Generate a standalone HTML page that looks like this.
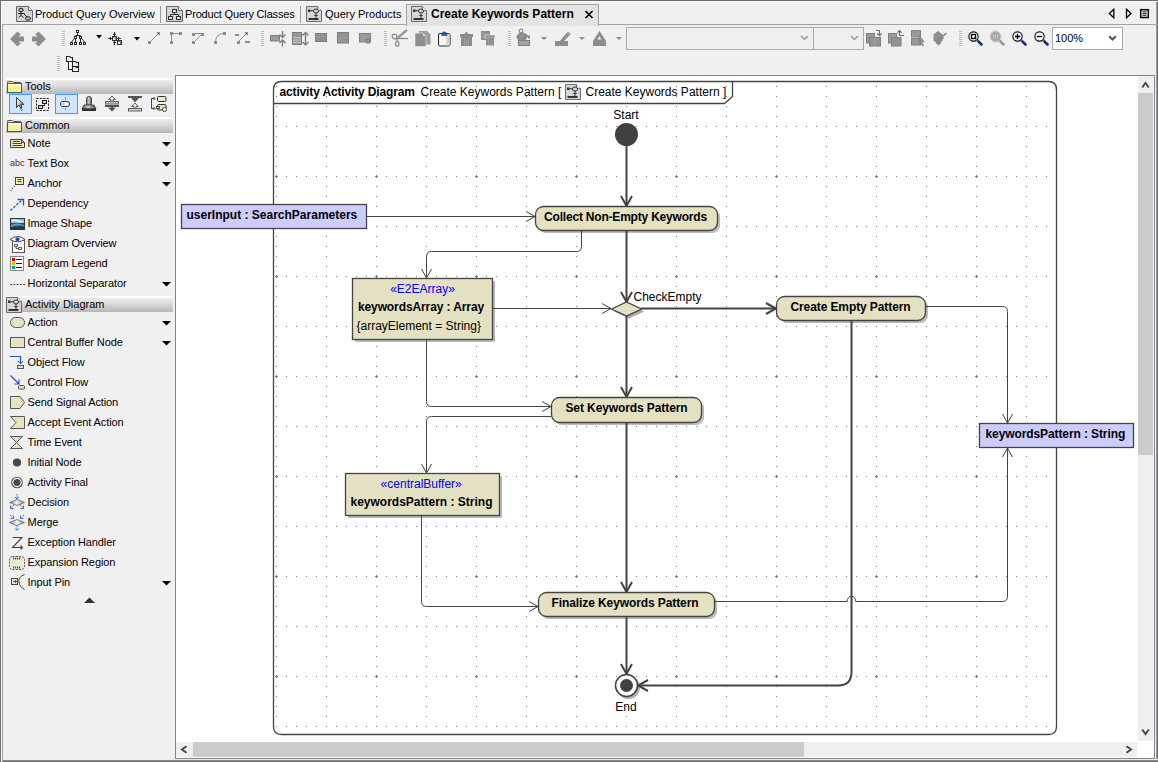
<!DOCTYPE html><html><head><meta charset="utf-8"><title>MagicDraw</title><style>html,body{margin:0;padding:0;width:1158px;height:762px;overflow:hidden;background:#f0f0f0;position:relative;font-family:"Liberation Sans",sans-serif}svg{overflow:visible}</style></head><body><div style="position:absolute;left:175px;top:75px;width:980px;height:684px;background:#fff;box-sizing:border-box;border:1px solid #7d8592;"></div><div style="position:absolute;left:1155px;top:25px;width:1px;height:737px;background:#f2f2f2"></div><div style="position:absolute;left:1156px;top:1px;width:1px;height:761px;background:#9c9c9c"></div><div style="position:absolute;left:1157px;top:0px;width:1px;height:762px;background:#6c6c6c"></div><div style="position:absolute;left:0px;top:759px;width:1158px;height:1px;background:#ececec"></div><div style="position:absolute;left:0px;top:760px;width:1158px;height:1px;background:#8c8c8c"></div><div style="position:absolute;left:0px;top:761px;width:1158px;height:1px;background:#6c6c6c"></div><div style="position:absolute;left:0px;top:0px;width:1158px;height:1px;background:#6b6b6b"></div><svg style="position:absolute;left:16px;top:6px" width="17" height="17" viewBox="0 0 17 17"><path d="M0.5 0.5H12.5L16.5 4.5V15.5H0.5Z" fill="#d4d4d4" stroke="#666"/><path d="M12.5 0.5V4.5H16.5" fill="#fff" stroke="#666"/><ellipse cx="5" cy="4" rx="2.2" ry="1.8" fill="#a9bce0" stroke="#222"/><path d="M5 6v3.5M2 7.5h6.5M2.5 11.5l2.5-2 2.5 2M8 8l3 3" stroke="#222" fill="none"/><ellipse cx="12" cy="12.5" rx="2.6" ry="1.7" fill="#a9bce0" stroke="#222"/></svg><div style="position:absolute;left:35px;top:8px;font:normal 11px/13px 'Liberation Sans', sans-serif;color:#000;white-space:pre;">Product Query Overview</div><div style="position:absolute;left:160px;top:6px;width:1px;height:17px;background:#9a9a9a"></div><svg style="position:absolute;left:166px;top:6px" width="17" height="17" viewBox="0 0 17 17"><path d="M0.5 0.5H12.5L16.5 4.5V15.5H0.5Z" fill="#d4d4d4" stroke="#666"/><path d="M12.5 0.5V4.5H16.5" fill="#fff" stroke="#666"/><rect x="6.5" y="3.5" width="4" height="3" fill="#cde" stroke="#333"/><rect x="2.5" y="10.5" width="4" height="3" fill="#cde" stroke="#333"/><rect x="10.5" y="10.5" width="4" height="3" fill="#cde" stroke="#333"/><path d="M8.5 6.5v2M4.5 10.5v-2h8v2" fill="none" stroke="#333"/></svg><div style="position:absolute;left:185px;top:8px;font:normal 11px/13px 'Liberation Sans', sans-serif;color:#000;white-space:pre;letter-spacing:-0.17px">Product Query Classes</div><div style="position:absolute;left:300px;top:6px;width:1px;height:17px;background:#9a9a9a"></div><svg style="position:absolute;left:306px;top:6px" width="17" height="17" viewBox="0 0 17 17"><path d="M0.5 0.5H11.5L15.5 4.5V15.5H0.5Z" fill="#d6d6d6" stroke="#6a6a6a"/><path d="M11.5 0.5V4.5H15.5" fill="#fafafa" stroke="#7a7a7a"/><rect x="2" y="3.5" width="2.5" height="2.5" fill="#333"/><path d="M4.5 4.75H7.5M10 7V12M8.3 9.5H11.7" stroke="#333"/><ellipse cx="10" cy="5" rx="2.6" ry="2" fill="#c5d5ef" stroke="#333"/><rect x="2.5" y="12" width="10" height="2" fill="#333"/></svg><div style="position:absolute;left:325px;top:8px;font:normal 11px/13px 'Liberation Sans', sans-serif;color:#000;white-space:pre;">Query Products</div><div style="position:absolute;left:0px;top:1px;width:1158px;height:1px;background:#fbfbfb"></div><div style="position:absolute;left:406px;top:4px;width:193px;height:22px;background:#e3e3e3;box-sizing:border-box;border:1px solid #a3a3a3;border-bottom:none"></div><svg style="position:absolute;left:411px;top:6px" width="17" height="17" viewBox="0 0 17 17"><path d="M0.5 0.5H11.5L15.5 4.5V15.5H0.5Z" fill="#d6d6d6" stroke="#6a6a6a"/><path d="M11.5 0.5V4.5H15.5" fill="#fafafa" stroke="#7a7a7a"/><rect x="2" y="3.5" width="2.5" height="2.5" fill="#333"/><path d="M4.5 4.75H7.5M10 7V12M8.3 9.5H11.7" stroke="#333"/><ellipse cx="10" cy="5" rx="2.6" ry="2" fill="#c5d5ef" stroke="#333"/><rect x="2.5" y="12" width="10" height="2" fill="#333"/></svg><div style="position:absolute;left:431px;top:7px;font:bold 12px/14px 'Liberation Sans', sans-serif;color:#000;white-space:pre;">Create Keywords Pattern</div><svg style="position:absolute;left:584px;top:10px" width="10" height="9" viewBox="0 0 10 9"><path d="M1.5 1L8.5 8M8.5 1L1.5 8" stroke="#000" stroke-width="1.7"/></svg><svg style="position:absolute;left:1108px;top:8px" width="8" height="12" viewBox="0 0 8 12"><path d="M5.8 1.2V9.8L1.3 5.5Z" fill="none" stroke="#000" stroke-width="1.3"/></svg><svg style="position:absolute;left:1125px;top:8px" width="8" height="12" viewBox="0 0 8 12"><path d="M1.5 1.2V9.8L6 5.5Z" fill="none" stroke="#000" stroke-width="1.3"/></svg><svg style="position:absolute;left:1139px;top:8px" width="11" height="11" viewBox="0 0 11 11"><rect x="1.7" y="1.7" width="7.6" height="7.8" fill="none" stroke="#000" stroke-width="1.5"/><path d="M3.5 3.9H7.5M3.5 5.6H7.5M3.5 7.3H7.5" stroke="#000" stroke-width="0.9"/></svg><div style="position:absolute;left:3px;top:24px;width:404px;height:1px;background:#a3a3a3"></div><div style="position:absolute;left:598px;top:24px;width:560px;height:1px;background:#a3a3a3"></div><div style="position:absolute;left:0;top:1px;width:1158px;height:60px"><svg style="position:absolute;left:8px;top:28px" width="40" height="20" viewBox="0 0 40 20"><path d="M2 10L9.5 2.5L12.8 5.8L10.5 7.5H16V12.5H10.5L12.8 14.2L9.5 17.5Z" fill="#8c8c8c"/><path d="M38 10L30.5 2.5L27.2 5.8L29.5 7.5H24V12.5H29.5L27.2 14.2L30.5 17.5Z" fill="#8c8c8c"/></svg><svg style="position:absolute;left:62px;top:30px" width="3" height="15" viewBox="0 0 3 15"><rect x="0" y="0" width="3" height="1" fill="#bdbdbd"/><rect x="0" y="2" width="3" height="1" fill="#bdbdbd"/><rect x="0" y="4" width="3" height="1" fill="#bdbdbd"/><rect x="0" y="6" width="3" height="1" fill="#bdbdbd"/><rect x="0" y="8" width="3" height="1" fill="#bdbdbd"/><rect x="0" y="10" width="3" height="1" fill="#bdbdbd"/><rect x="0" y="12" width="3" height="1" fill="#bdbdbd"/><rect x="0" y="14" width="3" height="1" fill="#bdbdbd"/></svg><svg style="position:absolute;left:66px;top:27px" width="24" height="20" viewBox="0 0 24 20"><g fill="#fff" stroke="#2a2a2a" stroke-width="1"><rect x="10.5" y="2.5" width="2" height="2"/><rect x="8.5" y="8.5" width="2" height="2"/><rect x="13.5" y="8.5" width="2" height="2"/><rect x="4.5" y="14.5" width="2" height="2"/><rect x="8.5" y="14.5" width="2" height="2"/><rect x="13.5" y="14.5" width="2" height="2"/><rect x="17.5" y="14.5" width="2" height="2"/><path fill="none" d="M11.5 5V7.5M9.5 8V7.5H14.5V8M9.5 11V14M14.5 11V14M8 11L5.5 14M16 11L18.5 14"/></g></svg><svg style="position:absolute;left:96px;top:34px" width="7" height="5" viewBox="0 0 7 5"><path d="M0 0H6L3 3.5Z" fill="#000"/></svg><svg style="position:absolute;left:104px;top:27px" width="40" height="20" viewBox="0 0 40 20"><path d="M10.5 4V17M4 10.5H17M9 6.5H12M9 14.5H12M6.5 9V12M14.5 9V12" stroke="#333" stroke-width="1.2"/><rect x="8.5" y="8.5" width="4" height="4" fill="#e98d2b" stroke="#333"/><rect x="9" y="10" width="2" height="2" fill="#f4f0d0"/><rect x="13.5" y="12.5" width="4" height="4" fill="#3f9f60" stroke="#333"/><rect x="14" y="14" width="2" height="2" fill="#f4f0d0"/><path d="M30 9H36L33 12.5Z" fill="#000"/></svg><svg style="position:absolute;left:148px;top:30px" width="14" height="14" viewBox="0 0 14 14"><path d="M1.5 11.5L10.5 2.5" stroke="#8c8c8c"/><rect x="0" y="10" width="3" height="3" fill="#8c8c8c"/><rect x="9" y="1" width="3" height="3" fill="#8c8c8c"/></svg><svg style="position:absolute;left:170px;top:30px" width="14" height="14" viewBox="0 0 14 14"><path d="M1.5 11.5V2.5H10.5" stroke="#8c8c8c" fill="none"/><rect x="0" y="10" width="3" height="3" fill="#8c8c8c"/><rect x="0" y="1" width="3" height="3" fill="#8c8c8c"/><rect x="9" y="1" width="3" height="3" fill="#8c8c8c"/></svg><svg style="position:absolute;left:192px;top:30px" width="14" height="14" viewBox="0 0 14 14"><path d="M1.5 2.5H10.5L1.5 11.5" stroke="#8c8c8c" fill="none"/><rect x="0" y="2" width="3" height="3" fill="#8c8c8c"/><rect x="9" y="2" width="3" height="3" fill="#8c8c8c"/><rect x="0" y="10" width="3" height="3" fill="#8c8c8c"/></svg><svg style="position:absolute;left:214px;top:30px" width="14" height="14" viewBox="0 0 14 14"><path d="M1.5 11.5Q1.5 2.5 10.5 2.5" stroke="#8c8c8c" fill="none"/><rect x="0" y="10" width="3" height="3" fill="#8c8c8c"/><rect x="9" y="1" width="3" height="3" fill="#8c8c8c"/></svg><svg style="position:absolute;left:235px;top:30px" width="15" height="14" viewBox="0 0 15 14"><path d="M3.5 10.5L11.5 2.5" stroke="#8c8c8c"/><rect x="0" y="3" width="4" height="2" fill="#8c8c8c"/><rect x="10" y="1" width="3" height="3" fill="#8c8c8c"/><rect x="2" y="10" width="3" height="3" fill="#8c8c8c"/><rect x="10" y="10" width="5" height="2" fill="#8c8c8c"/></svg><svg style="position:absolute;left:261px;top:30px" width="3" height="15" viewBox="0 0 3 15"><rect x="0" y="0" width="3" height="1" fill="#bdbdbd"/><rect x="0" y="2" width="3" height="1" fill="#bdbdbd"/><rect x="0" y="4" width="3" height="1" fill="#bdbdbd"/><rect x="0" y="6" width="3" height="1" fill="#bdbdbd"/><rect x="0" y="8" width="3" height="1" fill="#bdbdbd"/><rect x="0" y="10" width="3" height="1" fill="#bdbdbd"/><rect x="0" y="12" width="3" height="1" fill="#bdbdbd"/><rect x="0" y="14" width="3" height="1" fill="#bdbdbd"/></svg><svg style="position:absolute;left:258px;top:26px" width="132" height="23" viewBox="0 0 132 23"><g><rect x="12.5" y="8.5" width="9" height="5.5" fill="#999" stroke="#7e7e7e"/><path d="M13 9L21 13.5" stroke="#aaa" stroke-width="0.6"/><path d="M21.5 7.5L24.5 10.5L27.5 7.5M24.5 4v6M21.5 16L24.5 13L27.5 16M24.5 13.5v6" stroke="#7e7e7e" stroke-width="1.4" fill="none"/><rect x="34.5" y="5.5" width="9" height="12" fill="#999" stroke="#7e7e7e"/><path d="M35 10.5h8M35 13h8M35 15.5h8" stroke="#cfcfcf" stroke-width="0.8"/><path d="M44.5 8.5L47.5 5.5L50.5 8.5M47.5 5.5V18M44.5 15L47.5 18L50.5 15" stroke="#7e7e7e" stroke-width="1.4" fill="none"/><rect x="57.5" y="6.5" width="11" height="8" fill="#999" stroke="#7e7e7e"/><path d="M59 8.5h2M62 8.5h2M65 8.5h2M59 11h2M62 11h2M65 11h2M60 13h6" stroke="#7a7a7a" stroke-width="0.8"/><rect x="79.5" y="5.5" width="11" height="10.5" fill="#939393" stroke="#7e7e7e"/><path d="M80 11h10" stroke="#a0a0a0" stroke-width="0.6"/><rect x="101.5" y="6.5" width="11" height="8.5" fill="#999" stroke="#7e7e7e"/><path d="M102 7L112 14.5" stroke="#aaa" stroke-width="0.6"/><rect x="108.5" y="12.5" width="3" height="3.5" fill="#999" stroke="#7e7e7e"/></g></svg><svg style="position:absolute;left:384px;top:30px" width="3" height="15" viewBox="0 0 3 15"><rect x="0" y="0" width="3" height="1" fill="#bdbdbd"/><rect x="0" y="2" width="3" height="1" fill="#bdbdbd"/><rect x="0" y="4" width="3" height="1" fill="#bdbdbd"/><rect x="0" y="6" width="3" height="1" fill="#bdbdbd"/><rect x="0" y="8" width="3" height="1" fill="#bdbdbd"/><rect x="0" y="10" width="3" height="1" fill="#bdbdbd"/><rect x="0" y="12" width="3" height="1" fill="#bdbdbd"/><rect x="0" y="14" width="3" height="1" fill="#bdbdbd"/></svg><svg style="position:absolute;left:388px;top:26px" width="112" height="23" viewBox="0 0 112 23"><g><circle cx="6.5" cy="9.5" r="2.3" fill="none" stroke="#8a8a8a" stroke-width="1.3"/><rect x="7.6" y="14.6" width="3.2" height="4.6" rx="1" fill="none" stroke="#8a8a8a" stroke-width="1.2"/><path d="M9 11.5L19 3" stroke="#9a9a9a" stroke-width="2.4"/><path d="M9 11.5H20" stroke="#8a8a8a" stroke-width="1.3"/><path d="M8.5 11.5L9.5 14.5" stroke="#8a8a8a" stroke-width="1.2"/><path d="M31 4H39L42.5 7.5V17.5H31Z" fill="#9c9c9c"/><path d="M27 6H35L38 9V19.5H27Z" fill="#8e8e8e" stroke="#f0f0f0" stroke-width="0.6"/><path d="M35 6V9H38" fill="#ccc"/><rect x="50.5" y="6.5" width="11.5" height="12.5" rx="1.5" fill="#f6f6f6" stroke="#222"/><rect x="58" y="7" width="3.5" height="11.5" fill="#d8d8d8"/><path d="M53.5 8.5L55 5H57.5L59 8.5Z" fill="#1f5eb5" stroke="#173d73" stroke-width="0.6"/><rect x="72" y="7" width="13" height="3" fill="#8c8c8c"/><path d="M76.5 7L78.5 4.5L80.5 7Z" fill="#8c8c8c"/><rect x="73" y="10" width="11" height="9" fill="#8c8c8c"/><path d="M76.5 11v7M78.5 11v7M80.5 11v7" stroke="#a6a6a6" stroke-width="0.8"/><rect x="93" y="4" width="9" height="9" fill="#8c8c8c"/><path d="M95 4v9M97.5 4v9M93 7h9M93 10h9" stroke="#a8a8a8" stroke-width="0.6"/><rect x="97" y="8" width="10" height="3" fill="#8c8c8c" stroke="#f0f0f0" stroke-width="0.6"/><rect x="98" y="11" width="8" height="7.5" fill="#8c8c8c"/><path d="M100.5 12v6M103 12v6" stroke="#a6a6a6" stroke-width="0.8"/></g></svg><svg style="position:absolute;left:508px;top:30px" width="3" height="15" viewBox="0 0 3 15"><rect x="0" y="0" width="3" height="1" fill="#bdbdbd"/><rect x="0" y="2" width="3" height="1" fill="#bdbdbd"/><rect x="0" y="4" width="3" height="1" fill="#bdbdbd"/><rect x="0" y="6" width="3" height="1" fill="#bdbdbd"/><rect x="0" y="8" width="3" height="1" fill="#bdbdbd"/><rect x="0" y="10" width="3" height="1" fill="#bdbdbd"/><rect x="0" y="12" width="3" height="1" fill="#bdbdbd"/><rect x="0" y="14" width="3" height="1" fill="#bdbdbd"/></svg><svg style="position:absolute;left:512px;top:26px" width="112" height="23" viewBox="0 0 112 23"><g><path d="M4 9.5L9 4L16.5 8.5L13 14H6.5Z" fill="#8c8c8c"/><circle cx="9" cy="4" r="1.8" fill="#f0f0f0" stroke="#8c8c8c" stroke-width="1.2"/><path d="M8.5 9l1.2-1.2 1.2 1.2-1.2 1.2z" fill="#aaa"/><rect x="6.5" y="13.5" width="11" height="5" fill="#a4a4a4" stroke="#7f7f7f"/><rect x="16" y="8.5" width="2" height="3" fill="#8c8c8c"/><path d="M29 10H35L32 13Z" fill="#8c8c8c"/><path d="M45 17.5L54.5 6L57.5 8.5L48.5 17.5Z" fill="#8c8c8c"/><path d="M54.5 6L56 4.5L59 7L57.5 8.5Z" fill="#9a9a9a"/><rect x="43" y="14" width="13" height="5" fill="#8c8c8c"/><path d="M67 10H73L70 13Z" fill="#8c8c8c"/><path d="M81 14L87.5 4L94 14Z" fill="#8c8c8c"/><path d="M85.5 12.5L87.5 9L89.5 12.5Z" fill="#f0f0f0"/><rect x="81" y="14" width="13" height="5" fill="#8c8c8c"/><path d="M104 10H110L107 13Z" fill="#8c8c8c"/></g></svg><div style="position:absolute;left:626px;top:26px;width:186px;height:21px;border:1px solid #ababab;background:#efefef"></div><svg style="position:absolute;left:800px;top:34px" width="9" height="6" viewBox="0 0 9 6"><path d="M1 1L4.5 4.5L8 1" stroke="#999" stroke-width="1.5" fill="none"/></svg><div style="position:absolute;left:813px;top:26px;width:49px;height:21px;border:1px solid #ababab;background:#efefef"></div><svg style="position:absolute;left:850px;top:34px" width="9" height="6" viewBox="0 0 9 6"><path d="M1 1L4.5 4.5L8 1" stroke="#999" stroke-width="1.5" fill="none"/></svg><svg style="position:absolute;left:862px;top:26px" width="100" height="23" viewBox="0 0 100 23"><g><rect x="4.5" y="6.5" width="8" height="9.5" fill="#9a9a9a" stroke="#808080"/><rect x="7.5" y="10.5" width="11" height="8.5" fill="#939393" stroke="#808080"/><path d="M13 10.5V19" stroke="#a8a8a8" stroke-width="0.8"/><path d="M14 3.5H17.5V8.5M15.3 6.5L17.5 8.7L19.7 6.5" stroke="#707070" stroke-width="1.2" fill="none"/><rect x="26.5" y="6.5" width="8" height="9.5" fill="#9a9a9a" stroke="#808080"/><rect x="29.5" y="10.5" width="9.5" height="8.5" fill="#939393" stroke="#808080"/><path d="M42 8.5H37.5V3.5M35.3 5.7L37.5 3.5L39.7 5.7" stroke="#707070" stroke-width="1.2" fill="none"/><rect x="49.5" y="3.5" width="9" height="6.5" fill="#9a9a9a" stroke="#808080"/><rect x="49.5" y="11.5" width="9" height="6.5" fill="#9a9a9a" stroke="#808080"/><path d="M56.5 7V18L58.5 16L60.5 19.5L62 18.5L60 15.2H63Z" fill="#8a8a8a"/><path d="M71.5 7.5L76 4L80.5 7.5V14L76 16L71.5 14Z" fill="#8e8e8e"/><path d="M76 13.5L84.5 6" stroke="#777" stroke-width="1.2"/><path d="M75 12.5L79.5 15L77 18.5L73.5 16Z" fill="#8a8a8a"/><path d="M77 13.5L81 10" stroke="#8a8a8a" stroke-width="3"/></g></svg><svg style="position:absolute;left:959px;top:30px" width="3" height="15" viewBox="0 0 3 15"><rect x="0" y="0" width="3" height="1" fill="#bdbdbd"/><rect x="0" y="2" width="3" height="1" fill="#bdbdbd"/><rect x="0" y="4" width="3" height="1" fill="#bdbdbd"/><rect x="0" y="6" width="3" height="1" fill="#bdbdbd"/><rect x="0" y="8" width="3" height="1" fill="#bdbdbd"/><rect x="0" y="10" width="3" height="1" fill="#bdbdbd"/><rect x="0" y="12" width="3" height="1" fill="#bdbdbd"/><rect x="0" y="14" width="3" height="1" fill="#bdbdbd"/></svg><svg style="position:absolute;left:967px;top:29px" width="17" height="17" viewBox="0 0 17 17"><path d="M9.8 9.8L14.5 14.5" stroke="#0d2f86" stroke-width="2.6" stroke-linecap="round"/><circle cx="6.5" cy="6.5" r="5.6" fill="none" stroke="#d6d6d6" stroke-width="1"/><circle cx="6.5" cy="6.5" r="4.6" fill="#fff" stroke="#111" stroke-width="1.1"/><rect x="4.5" y="4.5" width="4" height="4" fill="none" stroke="#000" stroke-width="1.4"/></svg><svg style="position:absolute;left:989px;top:29px" width="17" height="17" viewBox="0 0 17 17"><path d="M9.8 9.8L14.5 14.5" stroke="#999" stroke-width="2.6" stroke-linecap="round"/><circle cx="6.5" cy="6.5" r="5.6" fill="none" stroke="#d6d6d6" stroke-width="1"/><circle cx="6.5" cy="6.5" r="4.6" fill="#a8a8a8" stroke="#a8a8a8" stroke-width="1.1"/><path d="M4.5 4.5v4M6.5 4.5v4M8.5 4.5v4" stroke="#c4c4c4"/></svg><svg style="position:absolute;left:1011px;top:29px" width="17" height="17" viewBox="0 0 17 17"><path d="M9.8 9.8L14.5 14.5" stroke="#0d2f86" stroke-width="2.6" stroke-linecap="round"/><circle cx="6.5" cy="6.5" r="5.6" fill="none" stroke="#d6d6d6" stroke-width="1"/><circle cx="6.5" cy="6.5" r="4.6" fill="#fff" stroke="#111" stroke-width="1.1"/><path d="M3.8 6.5h5.4M6.5 3.8v5.4" stroke="#000" stroke-width="1.4"/></svg><svg style="position:absolute;left:1033px;top:29px" width="17" height="17" viewBox="0 0 17 17"><path d="M9.8 9.8L14.5 14.5" stroke="#0d2f86" stroke-width="2.6" stroke-linecap="round"/><circle cx="6.5" cy="6.5" r="5.6" fill="none" stroke="#d6d6d6" stroke-width="1"/><circle cx="6.5" cy="6.5" r="4.6" fill="#fff" stroke="#111" stroke-width="1.1"/><path d="M3.8 6.5h5.4" stroke="#000" stroke-width="1.4"/></svg><div style="position:absolute;left:1052px;top:26px;width:69px;height:21px;border:1px solid #ababab;background:#fff"></div><div style="position:absolute;left:1055px;top:31px;font:normal 11px/13px 'Liberation Sans', sans-serif;color:#000;white-space:pre;">100%</div><svg style="position:absolute;left:1108px;top:34px" width="9" height="6" viewBox="0 0 9 6"><path d="M1.2 1.2L4.5 4.5L7.8 1.2" stroke="#555" stroke-width="2" fill="none"/></svg></div><svg style="position:absolute;left:57px;top:56px" width="3" height="15" viewBox="0 0 3 15"><rect x="0" y="0" width="3" height="1" fill="#bdbdbd"/><rect x="0" y="2" width="3" height="1" fill="#bdbdbd"/><rect x="0" y="4" width="3" height="1" fill="#bdbdbd"/><rect x="0" y="6" width="3" height="1" fill="#bdbdbd"/><rect x="0" y="8" width="3" height="1" fill="#bdbdbd"/><rect x="0" y="10" width="3" height="1" fill="#bdbdbd"/><rect x="0" y="12" width="3" height="1" fill="#bdbdbd"/><rect x="0" y="14" width="3" height="1" fill="#bdbdbd"/></svg><svg style="position:absolute;left:66px;top:56px" width="14" height="17" viewBox="0 0 14 17"><g fill="#fff" stroke="#252525" stroke-width="1.1"><path d="M2.5 5.5V13.5H6.5V5.5Z"/><path d="M0.5 5.5V0.5H3.5L4.5 1.5H6.5V5.5Z"/><path d="M6.5 10.5V5.5H9.5L10.5 6.5H12.5V10.5Z"/><path d="M6.5 15.5V10.5H9.5L10.5 11.5H12.5V15.5Z"/></g><path d="M1.5 3H5.5M7.5 8H11.5M7.5 13H11.5" stroke="#ccc" stroke-width="0.8"/></svg><div style="position:absolute;left:0px;top:0px;width:1px;height:762px;background:#707070"></div><div style="position:absolute;left:1px;top:1px;width:1px;height:761px;background:#fafafa"></div><div style="position:absolute;left:2px;top:24px;width:1px;height:738px;background:#a3a3a3"></div><div style="position:absolute;left:6px;top:78px;width:167px;height:2px;background:#fff"></div><div style="position:absolute;left:6px;top:80px;width:167px;height:14px;background:linear-gradient(#ececec,#dedede 35%,#b7b7b7)"></div><svg style="position:absolute;left:7px;top:81px" width="15" height="12" viewBox="0 0 15 12"><path d="M0.5 1.5V0.5H5.5L6.5 1.5H13.5V3.5" fill="#f8f0a0" stroke="#555"/><rect x="0.5" y="2.5" width="14" height="9" fill="#f6f09a" stroke="#555"/><rect x="1" y="3" width="13" height="2" fill="#fdf8c8"/></svg><div style="position:absolute;left:25px;top:80px;font:normal 11px/13px 'Liberation Sans', sans-serif;color:#000;white-space:pre;">Tools</div><div style="position:absolute;left:9px;top:94px;width:21px;height:18px;background:#cce6ff;border:1px solid #3d9bff"></div><svg style="position:absolute;left:6px;top:92px" width="74" height="24" viewBox="0 0 74 24"><defs><linearGradient id="arg" x1="0" y1="0" x2="1" y2="1"><stop offset="0" stop-color="#fff"/><stop offset="1" stop-color="#888"/></linearGradient></defs><path d="M10.5 5.5V15.5L13 13L14.5 16L16 15.2L14.7 12.3H17.8Z" fill="url(#arg)" stroke="#222" stroke-width="0.9" stroke-linejoin="round"/><path d="M14.8 16.3L16.3 19.2" stroke="#222" stroke-width="1.4" stroke-dasharray="1 0.8"/><rect x="30.5" y="6.5" width="12" height="12" fill="none" stroke="#222" stroke-dasharray="2.2 1.2"/><rect x="36.5" y="8.5" width="4" height="3" fill="#d0d0d0" stroke="#222"/><rect x="32.5" y="13.5" width="4" height="3" fill="#d0d0d0" stroke="#222"/><path d="M38.5 11.5V13.5H36.5" fill="none" stroke="#222"/></svg><div style="position:absolute;left:55px;top:94px;width:21px;height:18px;background:#cce6ff;border:1px solid #3d9bff"></div><svg style="position:absolute;left:57px;top:97px" width="16" height="16" viewBox="0 0 16 16"><path d="M8.5 0V3M8.5 11V13" stroke="#999" stroke-width="1"/><rect x="3.5" y="4.5" width="9" height="5" rx="2.5" fill="#f4f4f4" stroke="#333"/><rect x="4.5" y="5.5" width="3" height="3" fill="#ccc"/></svg><svg style="position:absolute;left:78px;top:93px" width="92" height="22" viewBox="0 0 92 22"><defs><linearGradient id="stg" x1="0" x2="1"><stop offset="0" stop-color="#555"/><stop offset="0.45" stop-color="#d0d0d0"/><stop offset="1" stop-color="#444"/></linearGradient></defs><path d="M8.5 12V5.5Q8.5 3.5 11 3.5Q13.5 3.5 13.5 5.5V12Z" fill="url(#stg)" stroke="#444" stroke-width="0.9"/><path d="M6 12H16L18 16H4Z" fill="url(#stg)" stroke="#444" stroke-width="0.9"/><rect x="4" y="15.5" width="14" height="2.5" fill="#333"/><path d="M30.5 6.5L34 3L37.5 6.5H35V8.5H33V6.5Z" fill="#e8e8e8" stroke="#555" stroke-width="0.9"/><rect x="27.5" y="8.5" width="13" height="2.5" fill="#ccc" stroke="#555" stroke-width="0.9"/><rect x="27" y="12" width="14" height="2" fill="#555"/><path d="M30 14.5H38L34 18.5Z" fill="#555"/><rect x="33" y="13.5" width="2" height="2" fill="#555"/><rect x="50" y="3" width="14" height="2" fill="#555"/><path d="M53 5H61L57 9.5Z" fill="#555"/><path d="M53.5 13.5L57 10L60.5 13.5H58V15.5H56V13.5Z" fill="#e8e8e8" stroke="#555" stroke-width="0.9"/><rect x="50.5" y="15.5" width="13" height="2.5" fill="#ccc" stroke="#555" stroke-width="0.9"/><path d="M74.5 5.5H73.5V15.5H74.5M73.5 5.5H76.5M73.5 15.5H76.5M75.5 4L77 5.5L75.5 7M75.5 14L77 15.5L75.5 17" fill="none" stroke="#333" stroke-width="0.9"/><rect x="79.5" y="3.5" width="8.5" height="5" rx="1.2" fill="#ece8c4" stroke="#333"/><rect x="79.5" y="11.5" width="8.5" height="5.5" rx="1.2" fill="#e6e2c0" stroke="#333"/><rect x="78.5" y="13.5" width="3" height="2" fill="#e6e2c0" stroke="#333" stroke-width="0.8"/><circle cx="86.5" cy="16.5" r="2" fill="#fff" stroke="#333" stroke-width="0.9"/></svg><div style="position:absolute;left:6px;top:117px;width:167px;height:2px;background:#fff"></div><div style="position:absolute;left:6px;top:119px;width:167px;height:14px;background:linear-gradient(#ececec,#dedede 35%,#b7b7b7)"></div><svg style="position:absolute;left:7px;top:120px" width="15" height="12" viewBox="0 0 15 12"><path d="M0.5 1.5V0.5H5.5L6.5 1.5H13.5V3.5" fill="#f8f0a0" stroke="#555"/><rect x="0.5" y="2.5" width="14" height="9" fill="#f6f09a" stroke="#555"/><rect x="1" y="3" width="13" height="2" fill="#fdf8c8"/></svg><div style="position:absolute;left:25px;top:119px;font:normal 11px/13px 'Liberation Sans', sans-serif;color:#000;white-space:pre;">Common</div><svg style="position:absolute;left:10px;top:136px" width="16" height="16" viewBox="0 0 16 16"><path d="M0.5 3.5H11.5L14.5 6.5V11.5H0.5Z" fill="#f3ebb5" stroke="#444"/><path d="M11.5 3.5V6.5H14.5" fill="none" stroke="#444"/><path d="M2.5 5.5H10M2.5 7.5H12M2.5 9.5H12" stroke="#444"/></svg><div style="position:absolute;left:27.6px;top:137px;font:normal 11px/13px 'Liberation Sans', sans-serif;color:#000;white-space:pre;letter-spacing:-0.1px">Note</div><svg style="position:absolute;left:162px;top:142px" width="9" height="5" viewBox="0 0 9 5"><path d="M0 0H9L4.5 4.5Z" fill="#000"/></svg><svg style="position:absolute;left:10px;top:156px" width="16" height="16" viewBox="0 0 16 16"><text x="0" y="10" font-family="Liberation Sans" font-size="9" fill="#333">abc</text></svg><div style="position:absolute;left:27.6px;top:157px;font:normal 11px/13px 'Liberation Sans', sans-serif;color:#000;white-space:pre;letter-spacing:-0.1px">Text Box</div><svg style="position:absolute;left:162px;top:162px" width="9" height="5" viewBox="0 0 9 5"><path d="M0 0H9L4.5 4.5Z" fill="#000"/></svg><svg style="position:absolute;left:10px;top:176px" width="16" height="16" viewBox="0 0 16 16"><rect x="5.5" y="1.5" width="8" height="7" fill="#f3ebb5" stroke="#444"/><path d="M7.5 3.5H11.5M7.5 5.5H11.5" stroke="#444"/><path d="M0.5 15L5.5 9" stroke="#444" stroke-dasharray="1.5 1"/></svg><div style="position:absolute;left:27.6px;top:177px;font:normal 11px/13px 'Liberation Sans', sans-serif;color:#000;white-space:pre;letter-spacing:-0.1px">Anchor</div><svg style="position:absolute;left:162px;top:182px" width="9" height="5" viewBox="0 0 9 5"><path d="M0 0H9L4.5 4.5Z" fill="#000"/></svg><svg style="position:absolute;left:10px;top:196px" width="16" height="16" viewBox="0 0 16 16"><path d="M0.5 14.5L12 4" stroke="#3050d0" stroke-dasharray="2.6 1.4" stroke-width="1.3"/><path d="M7.5 3.5H13.5V9.5" stroke="#3050d0" fill="none" stroke-width="1.3"/></svg><div style="position:absolute;left:27.6px;top:197px;font:normal 11px/13px 'Liberation Sans', sans-serif;color:#000;white-space:pre;letter-spacing:-0.1px">Dependency</div><svg style="position:absolute;left:10px;top:216px" width="16" height="16" viewBox="0 0 16 16"><rect x="0.5" y="2.5" width="14" height="11" fill="#24506e" stroke="#333"/><rect x="1" y="3" width="13" height="4" fill="#8fc0e0"/><path d="M2 5Q5 3.5 8 5T13 5" stroke="#e8f4ff" stroke-width="1.5" fill="none"/><path d="M1 9Q7 6 14 9V10Q7 8 1 11Z" fill="#6aa2b8"/><rect x="1" y="11" width="13" height="2" fill="#1b3a50"/></svg><div style="position:absolute;left:27.6px;top:217px;font:normal 11px/13px 'Liberation Sans', sans-serif;color:#000;white-space:pre;letter-spacing:-0.1px">Image Shape</div><svg style="position:absolute;left:10px;top:236px" width="16" height="16" viewBox="0 0 16 16"><rect x="2.5" y="4.5" width="12" height="12" fill="#fff" stroke="#555"/><path d="M4.5 8.5h3v2h-3zM8.5 11.5h3v2h-3zM6 10.5v2h2.5" fill="none" stroke="#444" stroke-width="0.9"/><path d="M0 3.5Q7.5 -2.5 15 3.5Q7.5 8 0 3.5Z" fill="#fff" stroke="#444"/><circle cx="7.5" cy="3.2" r="2" fill="#1f52d6"/><circle cx="7.5" cy="3.2" r="0.8" fill="#001060"/></svg><div style="position:absolute;left:27.6px;top:237px;font:normal 11px/13px 'Liberation Sans', sans-serif;color:#000;white-space:pre;letter-spacing:-0.1px">Diagram Overview</div><svg style="position:absolute;left:10px;top:256px" width="16" height="16" viewBox="0 0 16 16"><rect x="0.5" y="0.5" width="13" height="14" fill="#fff" stroke="#888"/><rect x="2" y="2" width="3" height="3" fill="#c00"/><rect x="2" y="6" width="3" height="3" fill="#fa0"/><rect x="2" y="10" width="3" height="3" fill="#099"/><path d="M6 3.5h6M6 7.5h6M6 11.5h6" stroke="#222"/></svg><div style="position:absolute;left:27.6px;top:257px;font:normal 11px/13px 'Liberation Sans', sans-serif;color:#000;white-space:pre;letter-spacing:-0.1px">Diagram Legend</div><svg style="position:absolute;left:10px;top:276px" width="16" height="16" viewBox="0 0 16 16"><path d="M0 8.5h15" stroke="#444" stroke-dasharray="2 1.3"/></svg><div style="position:absolute;left:27.6px;top:277px;font:normal 11px/13px 'Liberation Sans', sans-serif;color:#000;white-space:pre;letter-spacing:-0.1px">Horizontal Separator</div><svg style="position:absolute;left:162px;top:282px" width="9" height="5" viewBox="0 0 9 5"><path d="M0 0H9L4.5 4.5Z" fill="#000"/></svg><div style="position:absolute;left:6px;top:296px;width:167px;height:2px;background:#fff"></div><div style="position:absolute;left:6px;top:298px;width:167px;height:14px;background:linear-gradient(#ececec,#dedede 35%,#b7b7b7)"></div><svg style="position:absolute;left:6px;top:297px" width="17" height="17" viewBox="0 0 17 17"><path d="M0.5 0.5H11.5L15.5 4.5V15.5H0.5Z" fill="#d6d6d6" stroke="#6a6a6a"/><path d="M11.5 0.5V4.5H15.5" fill="#fafafa" stroke="#7a7a7a"/><rect x="2" y="3.5" width="2.5" height="2.5" fill="#333"/><path d="M4.5 4.75H7.5M10 7V12M8.3 9.5H11.7" stroke="#333"/><ellipse cx="10" cy="5" rx="2.6" ry="2" fill="#c5d5ef" stroke="#333"/><rect x="2.5" y="12" width="10" height="2" fill="#333"/></svg><div style="position:absolute;left:25px;top:298px;font:normal 11px/13px 'Liberation Sans', sans-serif;color:#000;white-space:pre;">Activity Diagram</div><svg style="position:absolute;left:10px;top:315px" width="16" height="16" viewBox="0 0 16 16"><rect x="0.5" y="2.5" width="14" height="10" rx="5" fill="#e6e3c0" stroke="#555"/></svg><div style="position:absolute;left:27.6px;top:316px;font:normal 11px/13px 'Liberation Sans', sans-serif;color:#000;white-space:pre;letter-spacing:-0.1px">Action</div><svg style="position:absolute;left:162px;top:321px" width="9" height="5" viewBox="0 0 9 5"><path d="M0 0H9L4.5 4.5Z" fill="#000"/></svg><svg style="position:absolute;left:10px;top:335px" width="16" height="16" viewBox="0 0 16 16"><rect x="0.5" y="2.5" width="14" height="10" fill="#e6e3c0" stroke="#555"/></svg><div style="position:absolute;left:27.6px;top:336px;font:normal 11px/13px 'Liberation Sans', sans-serif;color:#000;white-space:pre;letter-spacing:-0.1px">Central Buffer Node</div><svg style="position:absolute;left:162px;top:341px" width="9" height="5" viewBox="0 0 9 5"><path d="M0 0H9L4.5 4.5Z" fill="#000"/></svg><svg style="position:absolute;left:10px;top:355px" width="16" height="16" viewBox="0 0 16 16"><path d="M0 1.5H10.5V8" stroke="#2b50c8" fill="none" stroke-width="1.2"/><path d="M8 6l2.5 3 2.5-3" stroke="#2b50c8" fill="none"/><rect x="7.5" y="10.5" width="6" height="3" fill="#e6e3c0" stroke="#555"/></svg><div style="position:absolute;left:27.6px;top:356px;font:normal 11px/13px 'Liberation Sans', sans-serif;color:#000;white-space:pre;letter-spacing:-0.1px">Object Flow</div><svg style="position:absolute;left:10px;top:375px" width="16" height="16" viewBox="0 0 16 16"><path d="M0.5 0.5L9 9M9 4.5V9H4.5" stroke="#2b50c8" fill="none" stroke-width="1.2"/><rect x="8.5" y="10.5" width="6" height="3.5" rx="1" fill="#e6e3c0" stroke="#555"/></svg><div style="position:absolute;left:27.6px;top:376px;font:normal 11px/13px 'Liberation Sans', sans-serif;color:#000;white-space:pre;letter-spacing:-0.1px">Control Flow</div><svg style="position:absolute;left:10px;top:395px" width="16" height="16" viewBox="0 0 16 16"><path d="M0.5 1.5H10L14.5 7.5L10 13.5H0.5Z" fill="#e6e3c0" stroke="#555"/></svg><div style="position:absolute;left:27.6px;top:396px;font:normal 11px/13px 'Liberation Sans', sans-serif;color:#000;white-space:pre;letter-spacing:-0.1px">Send Signal Action</div><svg style="position:absolute;left:10px;top:415px" width="16" height="16" viewBox="0 0 16 16"><path d="M0.5 1.5H14.5V13.5H0.5L6 7.5Z" fill="#e6e3c0" stroke="#555"/></svg><div style="position:absolute;left:27.6px;top:416px;font:normal 11px/13px 'Liberation Sans', sans-serif;color:#000;white-space:pre;letter-spacing:-0.1px">Accept Event Action</div><svg style="position:absolute;left:10px;top:435px" width="16" height="16" viewBox="0 0 16 16"><path d="M0.5 1.5H12.5L0.5 13.5H12.5Z" fill="#e6e3c0" stroke="#555"/></svg><div style="position:absolute;left:27.6px;top:436px;font:normal 11px/13px 'Liberation Sans', sans-serif;color:#000;white-space:pre;letter-spacing:-0.1px">Time Event</div><svg style="position:absolute;left:10px;top:455px" width="16" height="16" viewBox="0 0 16 16"><circle cx="7" cy="7.5" r="4.1" fill="#484848"/></svg><div style="position:absolute;left:27.6px;top:456px;font:normal 11px/13px 'Liberation Sans', sans-serif;color:#000;white-space:pre;letter-spacing:-0.1px">Initial Node</div><svg style="position:absolute;left:10px;top:475px" width="16" height="16" viewBox="0 0 16 16"><circle cx="7" cy="7.5" r="5.3" fill="#fff" stroke="#555" stroke-width="1.1"/><circle cx="7" cy="7.5" r="3.6" fill="#484848"/></svg><div style="position:absolute;left:27.6px;top:476px;font:normal 11px/13px 'Liberation Sans', sans-serif;color:#000;white-space:pre;letter-spacing:-0.1px">Activity Final</div><svg style="position:absolute;left:10px;top:495px" width="16" height="16" viewBox="0 0 16 16"><defs><linearGradient id="dg" x1="0" x2="1"><stop offset="0" stop-color="#888"/><stop offset="0.5" stop-color="#f4f4f4"/><stop offset="1" stop-color="#888"/></linearGradient></defs><path d="M-0.5 7.5L7 4.5L14.5 7.5L7 10.5Z" fill="url(#dg)" stroke="#666" stroke-width="0.8"/><path d="M7 -1V3.5M4 10L0.5 13.5M10 10L13.5 13.5" stroke="#3a6ee8" fill="none" stroke-width="1" stroke-dasharray="1.5 0.7"/><path d="M5 2l2 2 2-2M0.5 10.5V13.5H3.5M13.5 10.5V13.5H10.5" stroke="#3a6ee8" fill="none" stroke-width="1"/></svg><div style="position:absolute;left:27.6px;top:496px;font:normal 11px/13px 'Liberation Sans', sans-serif;color:#000;white-space:pre;letter-spacing:-0.1px">Decision</div><svg style="position:absolute;left:10px;top:515px" width="16" height="16" viewBox="0 0 16 16"><path d="M-0.5 7.5L7 4.5L14.5 7.5L7 10.5Z" fill="url(#dg)" stroke="#666" stroke-width="0.8"/><path d="M7 10.5V15M0 0L3.5 3.5M14 0L10.5 3.5" stroke="#3a6ee8" fill="none" stroke-width="1" stroke-dasharray="1.5 0.7"/><path d="M5 13.5l2 2 2-2M0.5 3.5H3.5V0.5M13.5 3.5H10.5V0.5" stroke="#3a6ee8" fill="none" stroke-width="1"/></svg><div style="position:absolute;left:27.6px;top:516px;font:normal 11px/13px 'Liberation Sans', sans-serif;color:#000;white-space:pre;letter-spacing:-0.1px">Merge</div><svg style="position:absolute;left:10px;top:535px" width="16" height="16" viewBox="0 0 16 16"><path d="M2.5 2.5H12L2.5 12.5H12.5M10.5 10.5l2 2-2 2" fill="none" stroke="#444" stroke-width="1.1"/></svg><div style="position:absolute;left:27.6px;top:536px;font:normal 11px/13px 'Liberation Sans', sans-serif;color:#000;white-space:pre;letter-spacing:-0.1px">Exception Handler</div><svg style="position:absolute;left:10px;top:555px" width="16" height="16" viewBox="0 0 16 16"><rect x="-0.5" y="1.5" width="15" height="13" rx="3" fill="#ece9cf" stroke="#555" stroke-dasharray="2 1.2"/><path d="M3 3.5H11M3 12.5H11" stroke="#555" stroke-width="2" stroke-dasharray="1.2 0.8"/></svg><div style="position:absolute;left:27.6px;top:556px;font:normal 11px/13px 'Liberation Sans', sans-serif;color:#000;white-space:pre;letter-spacing:-0.1px">Expansion Region</div><svg style="position:absolute;left:10px;top:575px" width="16" height="16" viewBox="0 0 16 16"><rect x="1.5" y="3.5" width="6" height="6" fill="#ebe7c8" stroke="#444"/><path d="M3 6.5h3.2M5 5l1.5 1.5L5 8" stroke="#444" fill="none" stroke-width="0.9"/><path d="M14.5 -0.5Q8 2 9 7Q9.5 12 14.5 14.5" stroke="#444" fill="none"/></svg><div style="position:absolute;left:27.6px;top:576px;font:normal 11px/13px 'Liberation Sans', sans-serif;color:#000;white-space:pre;letter-spacing:-0.1px">Input Pin</div><svg style="position:absolute;left:162px;top:581px" width="9" height="5" viewBox="0 0 9 5"><path d="M0 0H9L4.5 4.5Z" fill="#000"/></svg><svg style="position:absolute;left:84px;top:597px" width="11" height="6" viewBox="0 0 11 6"><path d="M0 6H11L5.5 0.5Z" fill="#333"/></svg><svg width="1158" height="762" style="position:absolute;left:0;top:0"><clipPath id="cv"><rect x="176" y="76" width="962" height="666"/></clipPath><g clip-path="url(#cv)"><defs><pattern id="gh" x="276" y="126" width="10" height="50" patternUnits="userSpaceOnUse"><rect width="1" height="1" fill="#7a7a7a"/></pattern><pattern id="gv" x="276" y="86" width="50" height="10" patternUnits="userSpaceOnUse"><rect width="1" height="1" fill="#7a7a7a"/></pattern><pattern id="gc" x="275" y="175" width="100" height="100" patternUnits="userSpaceOnUse"><path d="M1 0h1v1h1v1h-1v1h-1v-1h-1v-1h1z" fill="#7a7a7a"/></pattern></defs><rect x="276" y="126" width="771" height="601" fill="url(#gh)"/><rect x="276" y="86" width="751" height="641" fill="url(#gv)"/><rect x="275" y="175" width="703" height="503" fill="url(#gc)"/><path d="M273.5 89.5Q273.5 81.5 281.5 81.5H1048.5Q1056.5 81.5 1056.5 89.5V726.5Q1056.5 734.5 1048.5 734.5H281.5Q273.5 734.5 273.5 726.5Z" fill="none" stroke="#434343" stroke-width="1.3"/><path d="M273.5 103.5H724.5L732.5 96.5V81.5" fill="none" stroke="#434343" stroke-width="1.3"/><text x="279.5" y="96" font-family="Liberation Sans" font-size="12" font-weight="bold" letter-spacing="-0.15" text-anchor="start" fill="#000">activity Activity Diagram</text><text x="420.5" y="96" font-family="Liberation Sans" font-size="12" text-anchor="start" fill="#000">Create Keywords Pattern [</text><text x="585.5" y="96" font-family="Liberation Sans" font-size="12" text-anchor="start" fill="#000">Create Keywords Pattern ]</text><g transform="translate(565 84)"><path d="M0.5 0.5H11.5L15.5 4.5V15.5H0.5Z" fill="#d6d6d6" stroke="#6a6a6a"/><path d="M11.5 0.5V4.5H15.5" fill="#fafafa" stroke="#7a7a7a"/><rect x="2" y="3.5" width="2.5" height="2.5" fill="#333"/><path d="M4.5 4.75H7.5M10 7V12M8.3 9.5H11.7" stroke="#333"/><ellipse cx="10" cy="5" rx="2.6" ry="2" fill="#c5d5ef" stroke="#333"/><rect x="2.5" y="12" width="10" height="2" fill="#333"/></g><text x="626" y="119" font-family="Liberation Sans" font-size="12" text-anchor="middle" fill="#000">Start</text><circle cx="626.5" cy="134.5" r="11.5" fill="#404040"/><rect x="538.0" y="209.0" width="182" height="24" rx="8" fill="#a9a9a9" opacity="0.8"/><rect x="779.0" y="299.0" width="149" height="24" rx="8" fill="#a9a9a9" opacity="0.8"/><rect x="554.0" y="400.0" width="150" height="25" rx="8" fill="#a9a9a9" opacity="0.8"/><rect x="541.0" y="595.0" width="176" height="24" rx="8" fill="#a9a9a9" opacity="0.8"/><path d="M614 311.5L629 304.5L644 311.5L629 318.5Z" fill="#a9a9a9"/><rect x="355.0" y="281.0" width="140" height="61" rx="0" fill="#a9a9a9" opacity="0.8"/><rect x="348.0" y="476.0" width="154" height="42" rx="0" fill="#a9a9a9" opacity="0.8"/><circle cx="628.5" cy="687.5" r="11.5" fill="#b0b0b0"/><path d="M626.5 146V206" fill="none" stroke="#434343" stroke-width="2"/><path d="M621.0 196L626.5 206L632.0 196" fill="none" stroke="#434343" stroke-width="2"/><path d="M626.5 225V302" fill="none" stroke="#434343" stroke-width="2"/><path d="M621.0 292L626.5 302L632.0 292" fill="none" stroke="#434343" stroke-width="2"/><path d="M626.5 312V397" fill="none" stroke="#434343" stroke-width="2"/><path d="M621.0 387L626.5 397L632.0 387" fill="none" stroke="#434343" stroke-width="2"/><path d="M626.5 415V592" fill="none" stroke="#434343" stroke-width="2"/><path d="M621.0 582L626.5 592L632.0 582" fill="none" stroke="#434343" stroke-width="2"/><path d="M626.5 610V674" fill="none" stroke="#434343" stroke-width="2"/><path d="M621.0 664L626.5 674L632.0 664" fill="none" stroke="#434343" stroke-width="2"/><path d="M641 308.5H776" fill="none" stroke="#434343" stroke-width="2"/><path d="M766 303.0L776 308.5L766 314.0" fill="none" stroke="#434343" stroke-width="2"/><path d="M851.5 315V672Q851.5 685.5 838 685.5H638" fill="none" stroke="#434343" stroke-width="2"/><path d="M648 680.0L638 685.5L648 691.0" fill="none" stroke="#434343" stroke-width="2"/><path d="M367 216.5H535" fill="none" stroke="#434343" stroke-width="1.0"/><path d="M526 211.5L535 216.5L526 221.5" fill="none" stroke="#434343" stroke-width="1.0"/><path d="M581.5 225V246.5Q581.5 251.5 576.5 251.5H431.5Q426.5 251.5 426.5 256.5V278" fill="none" stroke="#434343" stroke-width="1.0"/><path d="M421.5 269L426.5 278L431.5 269" fill="none" stroke="#434343" stroke-width="1.0"/><path d="M493 308.5H611" fill="none" stroke="#434343" stroke-width="1.0"/><path d="M602 303.5L611 308.5L602 313.5" fill="none" stroke="#434343" stroke-width="1.0"/><path d="M426.5 335V401.5Q426.5 406.5 431.5 406.5H551" fill="none" stroke="#434343" stroke-width="1.0"/><path d="M542 401.5L551 406.5L542 411.5" fill="none" stroke="#434343" stroke-width="1.0"/><path d="M551 416.5H431.5Q426.5 416.5 426.5 421.5V473" fill="none" stroke="#434343" stroke-width="1.0"/><path d="M421.5 464L426.5 473L431.5 464" fill="none" stroke="#434343" stroke-width="1.0"/><path d="M421.5 510V601.5Q421.5 606.5 426.5 606.5H538" fill="none" stroke="#434343" stroke-width="1.0"/><path d="M529 601.5L538 606.5L529 611.5" fill="none" stroke="#434343" stroke-width="1.0"/><path d="M926 306.5H1002.5Q1007.5 306.5 1007.5 311.5V423" fill="none" stroke="#434343" stroke-width="1.0"/><path d="M1002.5 414L1007.5 423L1012.5 414" fill="none" stroke="#434343" stroke-width="1.0"/><path d="M715 601.5H847.2A4.3 5.4 0 0 1 855.8 601.5H1002.5Q1007.5 601.5 1007.5 596.5V448" fill="none" stroke="#434343" stroke-width="1.0"/><path d="M1002.5 457L1007.5 448L1012.5 457" fill="none" stroke="#434343" stroke-width="1.0"/><rect x="535.5" y="206.5" width="182" height="24" rx="8" fill="#e3e1c2" stroke="#434343" stroke-width="1.3"/><text x="625.5" y="221" font-family="Liberation Sans" font-size="12" font-weight="bold" letter-spacing="-0.2" text-anchor="middle" fill="#000">Collect Non-Empty Keywords</text><rect x="776.5" y="296.5" width="149" height="24" rx="8" fill="#e3e1c2" stroke="#434343" stroke-width="1.3"/><text x="850.5" y="311" font-family="Liberation Sans" font-size="12" font-weight="bold" letter-spacing="-0.1" text-anchor="middle" fill="#000">Create Empty Pattern</text><rect x="551.5" y="397.5" width="150" height="25" rx="8" fill="#e3e1c2" stroke="#434343" stroke-width="1.3"/><text x="626.5" y="412" font-family="Liberation Sans" font-size="12" font-weight="bold" letter-spacing="-0.1" text-anchor="middle" fill="#000">Set Keywords Pattern</text><rect x="538.5" y="592.5" width="176" height="24" rx="8" fill="#e3e1c2" stroke="#434343" stroke-width="1.3"/><text x="625" y="607" font-family="Liberation Sans" font-size="12" font-weight="bold" letter-spacing="-0.1" text-anchor="middle" fill="#000">Finalize Keywords Pattern</text><path d="M611.5 309L626.5 302L641.5 309L626.5 316Z" fill="#e3e1c2" stroke="#434343" stroke-width="1.3"/><text x="633.5" y="301" font-family="Liberation Sans" font-size="12" text-anchor="start" fill="#000">CheckEmpty</text><rect x="181.5" y="204.5" width="185" height="24" rx="0" fill="#ccccff" stroke="#434343" stroke-width="1.3"/><text x="186.5" y="219" font-family="Liberation Sans" font-size="12" font-weight="bold" text-anchor="start" fill="#000">userInput : SearchParameters</text><rect x="352.5" y="278.5" width="140" height="61" rx="0" fill="#e3e1c2" stroke="#434343" stroke-width="1.3"/><text x="422.5" y="293" font-family="Liberation Sans" font-size="12" text-anchor="middle" fill="#0000ff">«E2EArray»</text><text x="421" y="311" font-family="Liberation Sans" font-size="12" font-weight="bold" letter-spacing="-0.1" text-anchor="middle" fill="#000">keywordsArray : Array</text><text x="356.5" y="330" font-family="Liberation Sans" font-size="12" text-anchor="start" fill="#000">{arrayElement = String}</text><rect x="345.5" y="473.5" width="154" height="42" rx="0" fill="#e3e1c2" stroke="#434343" stroke-width="1.3"/><text x="421.2" y="488" font-family="Liberation Sans" font-size="12" text-anchor="middle" fill="#0000ff">«centralBuffer»</text><text x="421.5" y="506" font-family="Liberation Sans" font-size="12" font-weight="bold" text-anchor="middle" fill="#000">keywordsPattern : String</text><rect x="979.5" y="423.5" width="154" height="24" rx="0" fill="#ccccff" stroke="#434343" stroke-width="1.3"/><text x="985.5" y="438" font-family="Liberation Sans" font-size="12" font-weight="bold" letter-spacing="-0.1" text-anchor="start" fill="#000">keywordsPattern : String</text><circle cx="626.5" cy="685.5" r="11" fill="#fff" stroke="#404040" stroke-width="1.5"/><circle cx="626.5" cy="685.5" r="6.5" fill="#404040"/><text x="626" y="711" font-family="Liberation Sans" font-size="12" text-anchor="middle" fill="#000">End</text></g></svg><div style="position:absolute;left:1138px;top:76px;width:16px;height:665px;background:#efefef"></div><div style="position:absolute;left:1153px;top:76px;width:1px;height:682px;background:#f8f8f8"></div><div style="position:absolute;left:1138px;top:93px;width:15px;height:362px;background:#cbcbcb"></div><svg style="position:absolute;left:1141px;top:81px" width="9" height="8" viewBox="0 0 9 8"><path d="M1.2 6.5L4.5 2L7.8 6.5" stroke="#4a4a4a" stroke-width="2" fill="none"/></svg><svg style="position:absolute;left:1141px;top:728px" width="9" height="8" viewBox="0 0 9 8"><path d="M1.2 1.5L4.5 6L7.8 1.5" stroke="#4a4a4a" stroke-width="2" fill="none"/></svg><div style="position:absolute;left:176px;top:742px;width:961px;height:15px;background:#efefef"></div><div style="position:absolute;left:193px;top:742px;width:611px;height:15px;background:#cbcbcb"></div><svg style="position:absolute;left:180px;top:745px" width="8" height="9" viewBox="0 0 8 9"><path d="M6.5 1.2L2 4.5L6.5 7.8" stroke="#4a4a4a" stroke-width="2" fill="none"/></svg><svg style="position:absolute;left:1125px;top:745px" width="8" height="9" viewBox="0 0 8 9"><path d="M1.5 1.2L6 4.5L1.5 7.8" stroke="#4a4a4a" stroke-width="2" fill="none"/></svg><div style="position:absolute;left:1137px;top:741px;width:17px;height:17px;background:#fff"></div></body></html>
